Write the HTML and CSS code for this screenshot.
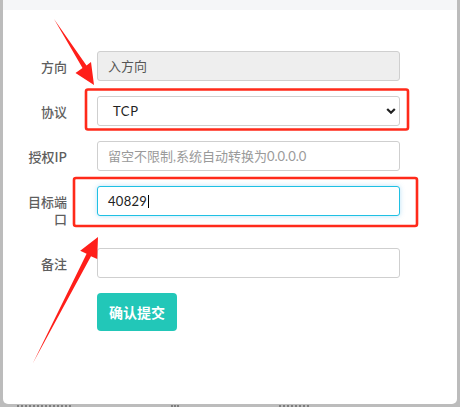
FILE: index.html
```html
<!DOCTYPE html>
<html lang="zh-CN">
<head>
<meta charset="utf-8">
<title>添加规则</title>
<link rel="stylesheet" href="styles.css">
</head>
<body>
<div class="backdrop">
  <div class="modal">
    <div class="modal-header"></div>
    <form class="modal-body">
      <div class="form-group">
        <label class="control-label">方向</label>
        <div class="form-control readonly">入方向</div>
      </div>
      <div class="form-group">
        <label class="control-label">协议</label>
        <div class="select-wrap">
          <div class="form-control select">TCP</div>
          <svg class="chevron" width="10" height="8" viewBox="0 0 10 8"><path d="M1.2 2 L5 5.8 L8.8 2" fill="none" stroke="#222" stroke-width="2.2"/></svg>
        </div>
      </div>
      <div class="form-group">
        <label class="control-label">授权IP</label>
        <div class="form-control placeholder">留空不限制,系统自动转换为0.0.0.0</div>
      </div>
      <div class="form-group">
        <label class="control-label">目标端口</label>
        <div class="form-control focused">40829<span class="caret"></span></div>
      </div>
      <div class="form-group">
        <label class="control-label">备注</label>
        <div class="form-control"></div>
      </div>
      <div class="form-group">
        <span></span>
        <div><button type="button" class="btn">确认提交</button></div>
      </div>
    </form>
  </div>
  <div class="under">
    <span class="ghost w1"></span><span class="ghost w2"></span><span class="ghost w3"></span>
  </div>
</div>
<svg class="annot" width="460" height="407" viewBox="0 0 460 407">
  <rect x="86" y="89.5" width="322" height="40" rx="2" fill="none" stroke="#ff2a1a" stroke-width="2.6"/>
  <rect x="74" y="178" width="343" height="48" rx="2" fill="none" stroke="#ff2a1a" stroke-width="2.6"/>
  <polygon points="54,19 82.5,68 75.5,73 94,85 91,62 86.5,65.5" fill="#ff1f1a"/>
  <polygon points="33,363 86.6,253.7 80.2,250.7 98,237 97.2,259 91,256.3" fill="#ff1f1a"/>
</svg>
</body>
</html>
```

FILE: styles.css
```css
html, body {
  margin: 0;
  padding: 0;
}
body {
  width: 460px;
  height: 407px;
  overflow: hidden;
  background: #bcbcbc;
  position: relative;
  font-family: "Noto Sans CJK SC", "Noto Sans", sans-serif;
}
.backdrop {
  padding-left: 3px;
  padding-right: 3px;
}
.modal {
  width: 454px;
  height: 404px;
  background: #fff;
  border-radius: 0 0 5px 5px;
  overflow: hidden;
}
.modal-header {
  height: 10px;
  background: #f5f6f8;
}
.modal-body {
  margin: 0;
  padding: 41px 0 0 24px;
}
.form-group {
  display: grid;
  grid-template-columns: 40px 303px;
  column-gap: 30px;
  margin-bottom: 15px;
}
.control-label {
  text-align: right;
  font-size: 13px;
  line-height: 17px;
  padding-top: 7px;
  padding-bottom: 6px;
  color: #5e5e5e;
  font-weight: 500;
}
.form-control {
  box-sizing: border-box;
  height: 30px;
  border: 1px solid #cfcfcf;
  border-radius: 3px;
  background: #fff;
  padding: 0 10px;
  font-family: "Lato", "Noto Sans CJK SC", sans-serif;
  font-size: 13px;
  line-height: 28px;
  color: #333;
  white-space: nowrap;
}
.readonly {
  background: #eeeeee;
  color: #555;
}
.select-wrap {
  position: relative;
}
.select {
  padding-left: 15px;
  color: #222;
  letter-spacing: 0.6px;
}
.chevron {
  position: absolute;
  right: 4px;
  top: 11px;
}
.placeholder {
  color: #9a9a9a;
}
.focused {
  border-color: #1fc0e3;
  box-shadow: 0 0 5px rgba(60, 170, 230, 0.35);
  color: #222;
  letter-spacing: 0.3px;
}
.caret {
  display: inline-block;
  width: 1px;
  height: 13px;
  background: #000;
  vertical-align: -2px;
  margin-left: 1px;
}
.btn {
  width: 80px;
  height: 38px;
  border: 0;
  border-radius: 4px;
  background: #22c7b8;
  color: #fff;
  font-family: "Noto Sans CJK SC", sans-serif;
  font-size: 14px;
  font-weight: 700;
  padding: 0;
  margin-top: 0;
}
.under {
  display: flex;
  gap: 100px;
  padding-left: 14px;
  padding-top: 1px;
}
.ghost {
  display: block;
  height: 2px;
  border-top: 2px dotted #555;
  opacity: 0.6;
}
.w1 { width: 54px; }
.w2 { width: 8px; }
.w3 { width: 30px; }
.annot {
  position: absolute;
  left: 0;
  top: 0;
  pointer-events: none;
}
```
